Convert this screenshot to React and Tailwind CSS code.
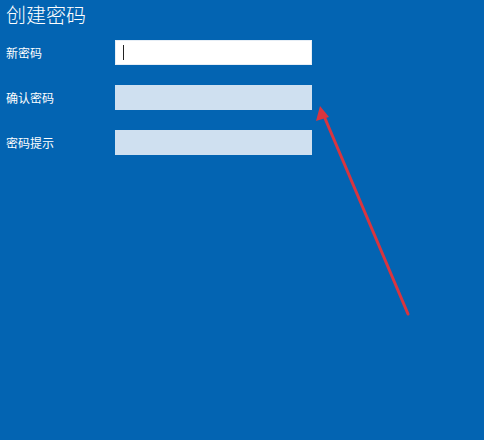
export default function App() {
  const fields = [
    { label: '新密码', active: true },
    { label: '确认密码' },
    { label: '密码提示' },
  ];

  return (
    <div
      className="relative w-[484px] h-[440px] overflow-hidden bg-[#0364b2] text-white"
      style={{ fontFamily: '"Noto Sans CJK SC", "Noto Sans", sans-serif' }}
    >
      <div className="flex flex-col pl-[6px] pt-[1px]">
        {/* Title */}
        <h1 className="text-[20px] leading-[28px] font-light">创建密码</h1>

        {/* Form rows */}
        <div className="mt-[11px] flex flex-col gap-[20px]">
          {fields.map((f) => (
            <div key={f.label} className="flex items-center h-[25px]">
              <span className="w-[109px] text-[12px] leading-none">{f.label}</span>
              <div
                className={
                  f.active
                    ? 'w-[197px] h-[25px] bg-white border border-[#e6eef6] flex items-center pl-[7px]'
                    : 'w-[197px] h-[25px] bg-[#cfe0f0]'
                }
              >
                {f.active && <div className="w-px h-[15px] bg-[#222]" />}
              </div>
            </div>
          ))}
        </div>
      </div>

      {/* Red annotation arrow */}
      <svg className="absolute inset-0 pointer-events-none" width="484" height="440">
        <line x1="408" y1="314" x2="324" y2="116" stroke="#d8353f" strokeWidth="3" strokeLinecap="round" />
        <polygon points="320,106 316,121 329,117" fill="#d8353f" />
      </svg>
    </div>
  );
}
